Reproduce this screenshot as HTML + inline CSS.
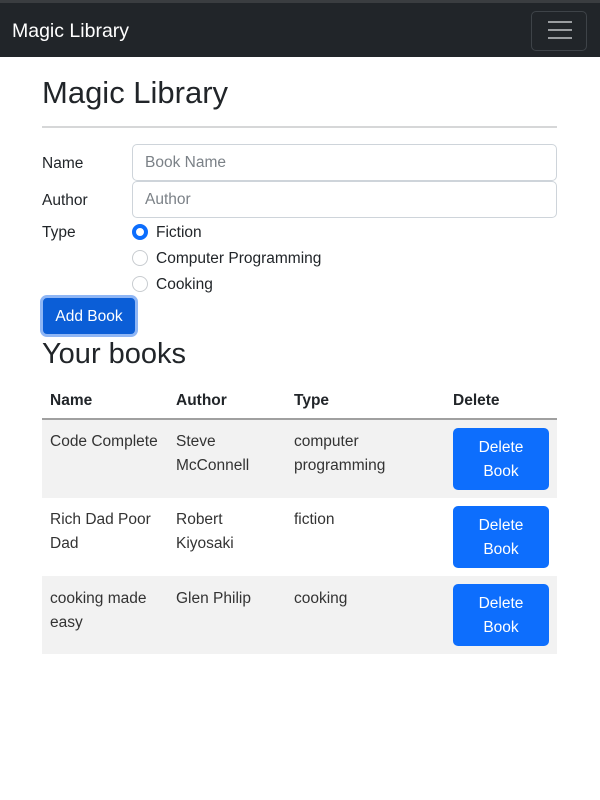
<!DOCTYPE html>
<html><head><style>
*{box-sizing:border-box;margin:0;padding:0}
body{width:600px;height:800px;background:#fff;font-family:"Liberation Sans",sans-serif;font-size:15.5px;color:#212529;position:relative;overflow:hidden}
.nav{position:absolute;left:0;top:0;width:600px;height:57px;background:#212529;border-top:3px solid #3a3d40}
.brand{position:absolute;left:12px;top:17px;color:#fff;font-size:19.5px}
.tog{position:absolute;left:531px;top:8px;width:56px;height:40px;border:1px solid #3e4348;border-radius:5px}
.tog i{position:absolute;left:16px;width:24px;height:2px;background:#9a9da0}
h1{position:absolute;left:42px;top:75px;font-size:31px;font-weight:500}
.hr{position:absolute;left:42px;top:126px;width:515px;height:2px;background:#d6d7d8}
.lab{position:absolute;left:42px}
.inp{position:absolute;left:132px;width:425px;height:37px;border:1px solid #ced4da;border-radius:5px;padding:9px 12px;color:#7b8187}
.rad{position:absolute;left:132px;width:16px;height:16px;border:1px solid #c8ccd0;border-radius:50%}
.rad.on{border:4px solid #0d6efd}
.rl{position:absolute;left:156px}
.btn{position:absolute;left:40px;top:295px;width:98px;height:42px;border:3px solid #8fb6f5;border-radius:7px;background:#0b5ed7;color:#fff;text-align:center;line-height:37px;font-size:15.5px}
h2{position:absolute;left:42px;top:338px;font-size:29px;font-weight:500}
.th{position:absolute;top:392px;font-weight:bold}
.hl{position:absolute;left:42px;top:418px;width:515px;height:2px;background:#a0a0a0}
.row{position:absolute;left:42px;width:515px;height:78px}
.c{position:absolute;line-height:24px;color:#333}
.del{position:absolute;left:453px;width:96px;height:62px;background:#0d6efd;border-radius:5px;color:#fff;text-align:center;line-height:24px;padding-top:8px}
</style></head><body>
<div class="nav"><div class="brand">Magic Library</div><div class="tog"><i style="top:9px"></i><i style="top:17px"></i><i style="top:25px"></i></div></div>
<h1>Magic Library</h1>
<div class="hr"></div>
<div class="lab" style="top:155px">Name</div>
<div class="inp" style="top:144px">Book Name</div>
<div class="lab" style="top:192px">Author</div>
<div class="inp" style="top:181px">Author</div>
<div class="lab" style="top:224px">Type</div>
<div class="rad on" style="top:224px"></div><div class="rl" style="top:224px">Fiction</div>
<div class="rad" style="top:250px"></div><div class="rl" style="top:250px">Computer Programming</div>
<div class="rad" style="top:276px"></div><div class="rl" style="top:276px">Cooking</div>
<div class="btn">Add Book</div>
<h2>Your books</h2>
<div class="th" style="left:50px">Name</div>
<div class="th" style="left:176px">Author</div>
<div class="th" style="left:294px">Type</div>
<div class="th" style="left:453px">Delete</div>
<div class="hl"></div>
<div class="row" style="top:420px;background:#f2f2f2"></div>
<div class="row" style="top:498px;background:#fff"></div>
<div class="row" style="top:576px;background:#f2f2f2"></div>
<div class="c" style="left:50px;top:430px">Code Complete</div>
<div class="c" style="left:176px;top:430px;width:110px">Steve<br>McConnell</div>
<div class="c" style="left:294px;top:430px">computer<br>programming</div>
<div class="del" style="top:428px">Delete<br>Book</div>
<div class="c" style="left:50px;top:508px">Rich Dad Poor<br>Dad</div>
<div class="c" style="left:176px;top:508px">Robert<br>Kiyosaki</div>
<div class="c" style="left:294px;top:508px">fiction</div>
<div class="del" style="top:506px">Delete<br>Book</div>
<div class="c" style="left:50px;top:587px">cooking made<br>easy</div>
<div class="c" style="left:176px;top:587px">Glen Philip</div>
<div class="c" style="left:294px;top:587px">cooking</div>
<div class="del" style="top:584px">Delete<br>Book</div>
</body></html>
